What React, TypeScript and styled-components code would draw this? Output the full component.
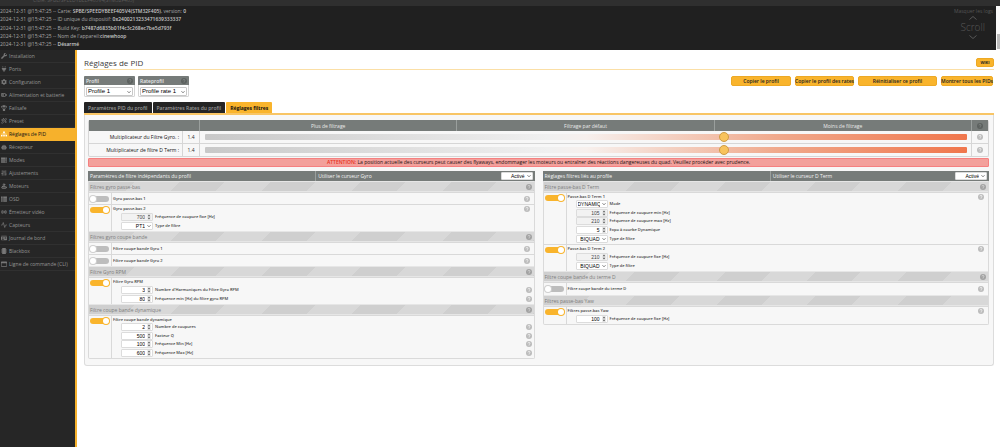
import React from "react";
import styled, { createGlobalStyle } from "styled-components";
import { BatteryMedium, SlidersVertical, Joystick, Radio, Activity, WandSparkles } from "lucide-react";
import {
  FaWrench, FaPlug, FaCog, FaParachuteBox, FaSitemap, FaRobot, FaServer, FaThList,
  FaIdCard, FaMicrochip, FaRegWindowMaximize,
} from "react-icons/fa";

const Global = createGlobalStyle`
  * { box-sizing: border-box; }
  body { margin: 0; background: #fff; font-family: "Open Sans", "Noto Sans", sans-serif; font-size: 5px; line-height: 8px; color: #303030; }
  button, input, select { font-family: inherit; margin: 0; }
`;

const Page = styled.div`
  display: flex;
  flex-direction: column;
  min-height: 100vh;
`;
const Header = styled.header`
  height: 6px;
  padding-left: 33px;
  overflow: hidden;
  background: #2f2f2f;
  color: #5a5a5a;
  line-height: 1px;
`;
const LogArea = styled.section`
  display: flex;
  height: 44px;
  background: #202020;
  color: #a8a8a8;
`;
const LogLines = styled.div`
  flex: 1;
  display: flex;
  flex-direction: column;
  justify-content: space-between;
  padding: 1px 0 2px;
  white-space: nowrap;
  b { color: #c8c8c8; font-weight: 600; }
`;
const LogTools = styled.div`
  display: flex;
  flex-direction: column;
  align-items: flex-end;
  padding: 1px 3px 0 0;
`;
const HideLogs = styled.button`
  border: 0;
  padding: 0;
  background: none;
  color: #555;
  font-size: 5px;
  line-height: 8px;
`;
const ScrollWord = styled.div`
  display: flex;
  flex-direction: column;
  align-items: center;
  margin: 1px 8px 0 0;
  color: #585858;
  font-size: 10px;
  font-weight: 300;
  line-height: 15px;
`;
const ScrollTrack = styled.div`
  width: 4px;
  padding: 28px 0 1px 1px;
  background: #fafafa;
`;
const ScrollThumb = styled.div`
  height: 15px;
  background: #bdbdbd;
`;
const Body = styled.div`
  flex: 1;
  display: flex;
`;
const Sidebar = styled.nav`
  width: 77px;
  flex: none;
  background: #262626;
  border-right: 2px solid #f6b12c;
`;
const NavItem = styled.a<{ $active?: boolean }>`
  display: flex;
  align-items: center;
  gap: 2px;
  height: 13px;
  padding-left: 1px;
  border-bottom: 1px solid ${(p) => (p.$active ? "#f6b12c" : "#303030")};
  background: ${(p) => (p.$active ? "#f6b12c" : "transparent")};
  color: ${(p) => (p.$active ? "#151515" : "#959595")};
  text-decoration: none;
  white-space: nowrap;
  svg { color: ${(p) => (p.$active ? "#fff" : "#777")}; flex: none; }
`;
const Main = styled.main`
  flex: 1;
  min-width: 0;
  padding: 6px 6px 0 7px;
`;
const TitleRow = styled.div`
  display: flex;
  align-items: center;
  justify-content: space-between;
  height: 14px;
  border-bottom: 1px solid #fbdfa6;
`;
const Title = styled.h1`
  margin: 0;
  font-size: 8px;
  line-height: 12px;
  font-weight: 400;
  color: #404040;
`;
const YellowButton = styled.button<{ $width: number; $small?: boolean }>`
  display: flex;
  align-items: center;
  justify-content: center;
  width: ${(p) => p.$width}px;
  height: ${(p) => (p.$small ? 9 : 10)}px;
  padding: 0;
  border: 1px solid #eda925;
  border-radius: 2px;
  background: #f9b42c;
  color: #222;
  font-size: ${(p) => (p.$small ? 4 : 5)}px;
  font-weight: ${(p) => (p.$small ? 700 : 600)};
  line-height: 8px;
  white-space: nowrap;
`;
const ProfileRow = styled.div`
  display: flex;
  gap: 3px;
  padding: 6px 1px 5px 0;
`;
const ProfileBox = styled.div`
  width: 51px;
  height: 21px;
  border: 1px solid #d6d6d6;
  border-radius: 1px;
  background: #fff;
`;
const ProfileHead = styled.label`
  display: flex;
  align-items: center;
  justify-content: space-between;
  height: 9px;
  margin: -1px -1px 0;
  padding: 0 2px;
  border-radius: 1px 1px 0 0;
  background: #767b79;
  color: #e8e8e8;
  font-weight: 600;
`;
const ProfileBody = styled.div`
  padding: 2px 1px;
`;
const Actions = styled.div`
  display: flex;
  gap: 4px;
  margin-left: auto;
`;
const Tabs = styled.div`
  display: flex;
  gap: 1px;
  border-bottom: 2px solid #f8c565;
`;
const Tab = styled.button<{ $active?: boolean }>`
  height: 11px;
  padding: 0 4px;
  border: 0;
  border-radius: 1px 1px 0 0;
  background: ${(p) => (p.$active ? "#f9b42c" : "#242424")};
  color: ${(p) => (p.$active ? "#111" : "#999")};
  font-size: 5px;
  line-height: 8px;
  font-weight: ${(p) => (p.$active ? 700 : 600)};
  white-space: nowrap;
`;
const Panel = styled.div`
  padding: 5px 4px 6px 3px;
  border: 1px solid #dcdcdc;
  border-top: 0;
  border-radius: 0 0 3px 3px;
  background: #f7f7f7;
`;
const SliderTable = styled.table`
  width: 100%;
  table-layout: fixed;
  border-collapse: separate;
  border-spacing: 0;
  border: 1px solid #d6d6d6;
  border-top: 0;
  border-radius: 2px;
  th, td { padding: 0; height: 12px; text-align: center; border-left: 1px solid #d6d6d6; line-height: 8px; }
  th { height: 11px; background: #767b79; color: #eaeaea; font-weight: 400; border-left-color: #9a9f9d; }
  tr + tr td { height: 13px; border-top: 1px solid #d6d6d6; }
  th:first-child, td:first-child { border-left: 0; }
  td:first-child { text-align: right; padding-right: 3px; color: #111; }
  svg { display: block; margin: 0 auto; }
`;
const Range = styled.input`
  display: block;
  appearance: none;
  width: calc(100% - 9px);
  height: 6px;
  margin: 0 auto;
  border-radius: 1px;
  background: linear-gradient(to right, #c8c8c8 0%, #f0f0f0 45%, #f7f0ed 50%, #f0a98c 75%, #f0764c 100%);
  &::-webkit-slider-thumb {
    appearance: none;
    width: 10px;
    height: 10px;
    border: 1px solid #cf9d45;
    border-radius: 50%;
    background: #f8c35c;
  }
`;
const Alert = styled.p`
  margin: 1px 0 4px;
  height: 9px;
  border: 1px solid #f58080;
  border-radius: 1px;
  background: #f3a09b;
  color: #201010;
  font-weight: 400;
  line-height: 7px;
  text-align: center;
  b { color: #e8301c; font-weight: 600; }
`;
const Columns = styled.div`
  display: grid;
  grid-template-columns: 1fr 1fr;
  align-items: start;
  gap: 8px;
`;
const Group = styled.section`
  border: 1px solid #dadada;
  border-top: 0;
  border-radius: 0 0 2px 2px;
`;
const GroupHead = styled.div`
  display: grid;
  grid-template-columns: 1fr 1fr;
  height: 10px;
  margin: 0 -1px;
  background: #767b79;
  color: #f4f4f4;
  line-height: 10px;
  > h2 { margin: 0; padding-left: 2px; font: inherit; }
  > div { display: flex; align-items: center; justify-content: space-between; margin-left: 4px; padding: 0 2px; border-left: 1px solid #9a9f9d; }
`;
const SectionBar = styled.div`
  display: flex;
  align-items: center;
  justify-content: space-between;
  height: 11px;
  padding: 0 2px 0 1px;
  border: solid #e6e6e6;
  border-width: 1px 0;
  background: repeating-linear-gradient(135deg, #cfcfcf 0 32px, #d8d8d8 32px 64px);
  color: #7d7d7d;
  line-height: 8px;
`;
const Row = styled.div<{ $height: number }>`
  display: grid;
  grid-template-columns: 23px 1fr;
  min-height: ${(p) => p.$height}px;
  border-top: 1px solid #d9d9d9;
`;
const SwitchCell = styled.div<{ $center?: boolean }>`
  display: flex;
  align-items: ${(p) => (p.$center ? "center" : "flex-start")};
  padding: ${(p) => (p.$center ? "0 2px 0 1px" : "2px 2px 0 1px")};
  border-right: 1px solid #d9d9d9;
`;
const Switch = styled.input`
  appearance: none;
  display: flex;
  width: 19px;
  height: 6px;
  border-radius: 3px;
  background: #bdbdbd;
  &::before { content: ""; width: 6px; height: 6px; border-radius: 50%; background: #fff; box-shadow: 0 0 0 1px #cfcfcf; }
  &:checked { justify-content: flex-end; background: #f9b42c; }
  &:checked::before { box-shadow: 0 0 0 1px #f9b42c; }
`;
const RowBody = styled.div<{ $center?: boolean }>`
  display: flex;
  flex-direction: column;
  justify-content: ${(p) => (p.$center ? "center" : "flex-start")};
  padding-left: 1px;
  color: #3c3c3c;
  font-size: 4px;
  font-weight: 600;
`;
const RowTitle = styled.div`
  display: flex;
  align-items: center;
  justify-content: space-between;
  height: 8px;
  padding-right: 4px;
  line-height: 8px;
`;
const Fields = styled.div`
  flex: 1;
  display: grid;
  grid-auto-rows: 1fr;
  margin: -1px 0 1px 8px;
`;
const Field = styled.label`
  display: flex;
  align-items: center;
  gap: 2px;
  padding-right: 2px;
  line-height: 8px;
  > svg { margin-left: auto; }
`;
const Control = styled.span<{ $width?: number; $disabled?: boolean }>`
  display: flex;
  align-items: center;
  gap: 2px;
  width: ${(p) => (p.$width ? p.$width + "px" : "100%")};
  height: 8px;
  padding: 0 1px;
  border: 1px solid #dcdcdc;
  border-radius: 1px;
  background: ${(p) => (p.$disabled ? "#f2f2f2" : "#fff")};
  color: ${(p) => (p.$disabled ? "#444" : "#000")};
  svg { flex: none; }
  input, select {
    appearance: none;
    flex: 1;
    min-width: 0;
    height: 6px;
    padding: 0;
    border: 0;
    outline: 0;
    background: none;
    color: inherit;
    font: 5px/6px "Liberation Sans", Arial, sans-serif;
    text-align: right;
  }
  input::-webkit-inner-spin-button { appearance: none; display: none; }
`;
const ProfileControl = styled(Control)`
  height: 9px;
  border-color: #c8c8c8;
  select { text-align: left; height: 7px; font-size: 6px; line-height: 7px; }
`;
const HelpIcon = styled.svg`
  flex: none;
`;

function Help({ tone = "row" }: { tone?: "row" | "bar" | "head" }) {
  const fill = { row: "#bcbcbc", bar: "#a2a2a2", head: "#5c615f" }[tone];
  const mark = { row: "#fafafa", bar: "#dcdcdc", head: "#868b89" }[tone];
  return (
    <HelpIcon width="6" height="6" viewBox="0 0 12 12" aria-hidden="true">
      <circle cx="6" cy="6" r="6" fill={fill} />
      <path d="M4 4.8a2 2 0 1 1 2.8 1.7q-.8.4-.8 1.3M6 9v1" fill="none" stroke={mark} strokeWidth="1.5" />
    </HelpIcon>
  );
}
const Chevron = () => (
  <svg width="4" height="4" viewBox="0 0 8 8" aria-hidden="true">
    <path d="M1 2.5 4 5.5 7 2.5" fill="none" stroke="#444" strokeWidth="1.4" />
  </svg>
);
const Spinner = () => (
  <svg width="4" height="6" viewBox="0 0 8 12" aria-hidden="true">
    <rect width="8" height="12" fill="#ececec" />
    <path d="M4 1 6.5 4.5H1.5zM4 11 6.5 7.5H1.5z" fill="#555" />
  </svg>
);
const Caret = ({ up }: { up?: boolean }) => (
  <svg width="8" height="4" viewBox="0 0 8 4" aria-hidden="true">
    <path d={up ? "M.5 3.5 4 .5 7.5 3.5" : "M.5.5 4 3.5 7.5.5"} fill="none" stroke="#585858" />
  </svg>
);

type FieldData = { value: string; label: string; select?: boolean; disabled?: boolean; help?: boolean };
type RowData = { title: string; on?: boolean; height: number; help?: boolean; fields?: FieldData[] };
type SectionData = { title: string; help?: boolean; rows: RowData[] };

const left: SectionData[] = [
  { title: "Filtres gyro passe-bas", help: true, rows: [
    { title: "Gyro passe-bas 1", height: 12, help: true },
    { title: "Gyro passe-bas 2", on: true, height: 27, help: true, fields: [
      { value: "700", label: "Fréquence de coupure fixe [Hz]", disabled: true },
      { value: "PT1", label: "Type de filtre", select: true },
    ] },
  ] },
  { title: "Filtres gyro coupe bande", help: true, rows: [
    { title: "Filtre coupe bande Gyro 1", height: 12, help: true },
    { title: "Filtre coupe bande Gyro 2", height: 12, help: true },
  ] },
  { title: "Filtre Gyro RPM", help: true, rows: [
    { title: "Filtre Gyro RPM", on: true, height: 27, fields: [
      { value: "3", label: "Nombre d'Harmoniques du Filtre Gyro RPM", help: true },
      { value: "80", label: "Fréquence min [Hz] du filtre gyro RPM", help: true },
    ] },
  ] },
  { title: "Filtre coupe bande dynamique", help: true, rows: [
    { title: "Filtre coupe bande dynamique", on: true, height: 43, fields: [
      { value: "2", label: "Nombre de coupures", help: true },
      { value: "500", label: "Facteur Q", help: true },
      { value: "100", label: "Fréquence Min [Hz]", help: true },
      { value: "600", label: "Fréquence Max [Hz]", help: true },
    ] },
  ] },
];
const right: SectionData[] = [
  { title: "Filtre passe-bas D Term", help: true, rows: [
    { title: "Passe-bas D Term 1", on: true, height: 52, help: true, fields: [
      { value: "DYNAMIQUE", label: "Mode", select: true },
      { value: "105", label: "Fréquence de coupure min [Hz]", disabled: true },
      { value: "210", label: "Fréquence de coupure max [Hz]", disabled: true },
      { value: "5", label: "Expo à courbe Dynamique" },
      { value: "BIQUAD", label: "Type de filtre", select: true },
    ] },
    { title: "Passe-bas D Term 2", on: true, height: 27, help: true, fields: [
      { value: "210", label: "Fréquence de coupure fixe [Hz]", disabled: true },
      { value: "BIQUAD", label: "Type de filtre", select: true },
    ] },
  ] },
  { title: "Filtre coupe bande du terme D", help: true, rows: [
    { title: "Filtre coupe bande du terme D", height: 13, help: true },
  ] },
  { title: "Filtres passe-bas Yaw", rows: [
    { title: "Filtres passe-bas Yaw", on: true, height: 18, help: true, fields: [
      { value: "100", label: "Fréquence de coupure fixe [Hz]" },
    ] },
  ] },
];

function FilterGroup({ title, slider, sections }: { title: string; slider: string; sections: SectionData[] }) {
  return (
    <Group>
      <GroupHead>
        <h2>{title}</h2>
        <div>
          <span>{slider}</span>
          <Control $width={32}>
            <select aria-label={slider}><option>Activé</option></select><Chevron />
          </Control>
        </div>
      </GroupHead>
      {sections.map((s) => (
        <React.Fragment key={s.title}>
          <SectionBar><span>{s.title}</span>{s.help && <Help tone="bar" />}</SectionBar>
          {s.rows.map((r) => (
            <Row key={r.title} $height={r.height}>
              <SwitchCell $center={!r.fields}>
                <Switch type="checkbox" defaultChecked={r.on} aria-label={r.title} />
              </SwitchCell>
              <RowBody $center={!r.fields}>
                <RowTitle><span>{r.title}</span>{r.help && <Help />}</RowTitle>
                {r.fields && (
                  <Fields>
                    {r.fields.map((f) => (
                      <Field key={f.label}>
                        <Control $width={32} $disabled={f.disabled}>
                          {f.select ? (
                            <><select><option>{f.value}</option></select><Chevron /></>
                          ) : (
                            <><input type="number" defaultValue={f.value} disabled={f.disabled} /><Spinner /></>
                          )}
                        </Control>
                        {f.label}
                        {f.help && <Help />}
                      </Field>
                    ))}
                  </Fields>
                )}
              </RowBody>
            </Row>
          ))}
        </React.Fragment>
      ))}
    </Group>
  );
}

const nav = [
  { label: "Installation", icon: <FaWrench size={6} /> },
  { label: "Ports", icon: <FaPlug size={6} /> },
  { label: "Configuration", icon: <FaCog size={6} /> },
  { label: "Alimentation et batterie", icon: <BatteryMedium size={6} strokeWidth={3} /> },
  { label: "Failsafe", icon: <FaParachuteBox size={6} /> },
  { label: "Preset", icon: <WandSparkles size={6} strokeWidth={3} /> },
  { label: "Réglages de PID", icon: <FaSitemap size={6} /> },
  { label: "Récepteur", icon: <FaRobot size={6} /> },
  { label: "Modes", icon: <FaServer size={6} /> },
  { label: "Ajustements", icon: <SlidersVertical size={6} strokeWidth={3} /> },
  { label: "Moteurs", icon: <Joystick size={6} strokeWidth={4} /> },
  { label: "OSD", icon: <FaThList size={6} /> },
  { label: "Émetteur vidéo", icon: <Radio size={6} strokeWidth={3} /> },
  { label: "Capteurs", icon: <Activity size={6} strokeWidth={3} /> },
  { label: "Journal de bord", icon: <FaIdCard size={6} /> },
  { label: "Blackbox", icon: <FaMicrochip size={6} /> },
  { label: "Ligne de commande (CLI)", icon: <FaRegWindowMaximize size={6} /> },
];
const logs = [
  ["Carte: ", "SPBE/SPEEDYBEEF405V4(STM32F405)", ", version: ", "0"],
  ["ID unique du dispositif: ", "0x2400213233471639333337"],
  ["Build Key: ", "b7487d6835b01f4c3c268ec7be5d793f"],
  ["Nom de l'appareil:", "cinewhoop"],
  ["", "Désarmé"],
];

export default function App() {
  return (
    <Page>
      <Global />
      <Header>Cible: SPBE/SPEEDYBEEF405V4(STM32F405)</Header>
      <LogArea>
        <LogLines>
          {logs.map((parts, i) => (
            <div key={i}>
              2024-12-31 @15:47:25 -- {parts.map((t, j) => (j % 2 ? <b key={j}>{t}</b> : t))}
            </div>
          ))}
        </LogLines>
        <LogTools>
          <HideLogs>Masquer les logs</HideLogs>
          <ScrollWord><Caret up />Scroll<Caret /></ScrollWord>
        </LogTools>
        <ScrollTrack><ScrollThumb /></ScrollTrack>
      </LogArea>
      <Body>
        <Sidebar>
          {nav.map(({ label, icon }) => (
            <NavItem key={label} href="#" $active={label === "Réglages de PID"}>
              {icon}{label}
            </NavItem>
          ))}
        </Sidebar>
        <Main>
          <TitleRow>
            <Title>Réglages de PID</Title>
            <YellowButton $width={18} $small>WIKI</YellowButton>
          </TitleRow>
          <ProfileRow>
            <ProfileBox>
              <ProfileHead htmlFor="profile">Profil<Help tone="head" /></ProfileHead>
              <ProfileBody>
                <ProfileControl><select id="profile"><option>Profile 1</option></select><Chevron /></ProfileControl>
              </ProfileBody>
            </ProfileBox>
            <ProfileBox>
              <ProfileHead htmlFor="rate">Rateprofil<Help tone="head" /></ProfileHead>
              <ProfileBody>
                <ProfileControl><select id="rate"><option>Profile rate 1</option></select><Chevron /></ProfileControl>
              </ProfileBody>
            </ProfileBox>
            <Actions>
              <YellowButton $width={60}>Copier le profil</YellowButton>
              <YellowButton $width={59}>Copier le profil des rates</YellowButton>
              <YellowButton $width={79}>Réinitialiser ce profil</YellowButton>
              <YellowButton $width={52}>Montrer tous les PIDs</YellowButton>
            </Actions>
          </ProfileRow>
          <Tabs>
            <Tab>Paramètres PID du profil</Tab>
            <Tab>Paramètres Rates du profil</Tab>
            <Tab $active>Réglages filtres</Tab>
          </Tabs>
          <Panel>
            <SliderTable>
              <colgroup>
                <col style={{ width: 93 }} /><col style={{ width: 17 }} />
                <col /><col /><col /><col style={{ width: 17 }} />
              </colgroup>
              <thead>
                <tr><th colSpan={2} /><th>Plus de filtrage</th><th>Filtrage par défaut</th><th>Moins de filtrage</th><th><Help tone="head" /></th></tr>
              </thead>
              <tbody>
                {["Multiplicateur du Filtre Gyro. :", "Multiplicateur de filtre D Term :"].map((t) => (
                  <tr key={t}>
                    <td>{t}</td><td>1.4</td>
                    <td colSpan={3}><Range type="range" min={0} max={1000} defaultValue={684} aria-label={t} /></td>
                    <td><Help /></td>
                  </tr>
                ))}
              </tbody>
            </SliderTable>
            <Alert>
              <b>ATTENTION:</b> La position actuelle des curseurs peut causer des flyaways, endommager les moteurs ou entraîner des réactions dangereuses du quad. Veuillez procéder avec prudence.
            </Alert>
            <Columns>
              <FilterGroup title="Paramètres de filtre indépendants du profil" slider="Utiliser le curseur Gyro" sections={left} />
              <FilterGroup title="Réglages filtres liés au profile" slider="Utiliser le curseur D Term" sections={right} />
            </Columns>
          </Panel>
        </Main>
      </Body>
    </Page>
  );
}
